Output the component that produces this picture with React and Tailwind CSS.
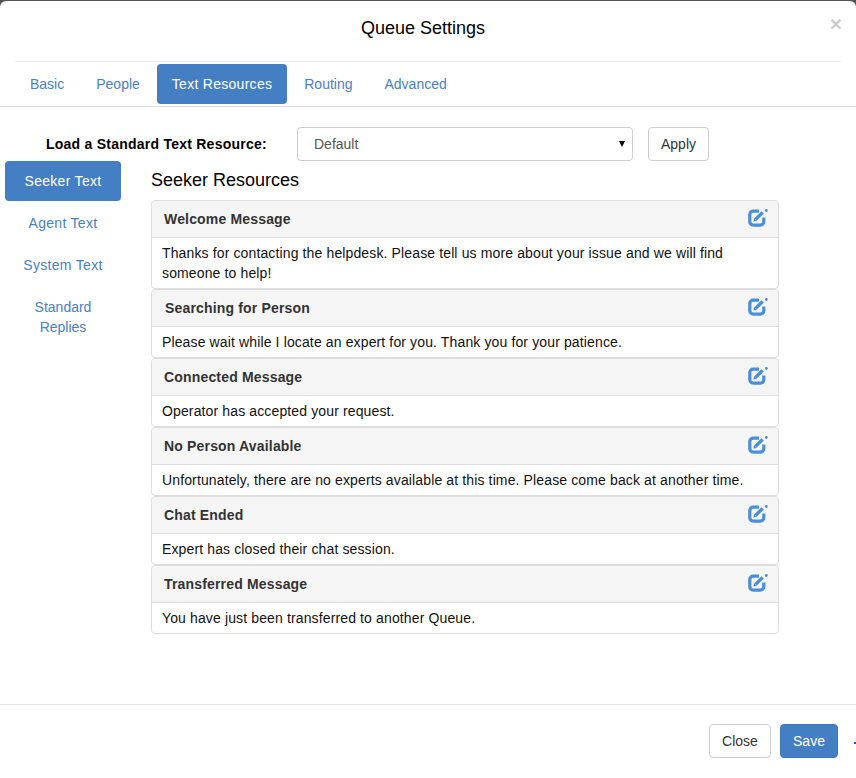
import { useState } from "react"

const tabs = ["Basic", "People", "Text Resources", "Routing", "Advanced"]

const resources = [
  { title: "Welcome Message", body: "Thanks for contacting the helpdesk. Please tell us more about your issue and we will find someone to help!" },
  { title: "Searching for Person", body: "Please wait while I locate an expert for you. Thank you for your patience.", nudge: true },
  { title: "Connected Message", body: "Operator has accepted your request." },
  { title: "No Person Available", body: "Unfortunately, there are no experts available at this time. Please come back at another time." },
  { title: "Chat Ended", body: "Expert has closed their chat session." },
  { title: "Transferred Message", body: "You have just been transferred to another Queue." },
]

function EditIcon() {
  return (
    <svg className="-mt-[2px]" width="20" height="18" viewBox="0 0 20 18" fill="none" stroke="#4a8fd6" strokeWidth="3.2" strokeLinejoin="round">
      <path d="M11 2.2H5.2A3.4 3.4 0 0 0 1.8 5.6V12.8A3.4 3.4 0 0 0 5.2 16.2h7.2a3.4 3.4 0 0 0 3.4-3.4V8.6" />
      <path d="M7.6 10.4 14.6 3.4" strokeWidth="3.4" />
      <path d="M5.4 12.6l.7-3.6 2.9 2.9z" fill="#4a8fd6" stroke="none" />
      <circle cx="18.3" cy="1.5" r="1.4" fill="#4a8fd6" stroke="none" />
    </svg>
  )
}

function ResourcePanel({ title, body, nudge }) {
  return (
    <div className="border border-[#ddd] rounded bg-white">
      <div className={"flex justify-between items-center h-[37px] pr-[10px] bg-[#f5f5f5] border-b border-[#ddd] rounded-t " + (nudge ? "pl-[13px]" : "pl-3")}>
        <span className="font-bold tracking-[0.17px] text-[#333]">{title}</span>
        <EditIcon />
      </div>
      <div className="px-[10px] py-[5px] leading-5 tracking-[0.13px] text-[#111]">{body}</div>
    </div>
  )
}

export default function App() {
  const [tab] = useState("Text Resources")

  return (
    <div className="h-[778px] bg-[#555] font-['Liberation_Sans',Arial,sans-serif] text-sm overflow-hidden">
      <div className="relative h-[777px] mt-px bg-white rounded-t-md flex flex-col">
        {/* Header */}
        <div className="mx-[15px] h-[61px] border-b border-[#eee] flex items-center justify-center pr-[10px] shrink-0">
          <h4 className="text-lg leading-none text-black -mt-[6px]">Queue Settings</h4>
        </div>
        <button className="absolute top-[13px] right-[14px] text-[21px] leading-5 font-bold text-[#ccc]">×</button>

        {/* Tabs */}
        <div className="h-[45px] border-b border-[#ddd] pl-[15px] pt-[2px] flex gap-[2px] shrink-0">
          {tabs.map((t) => (
            <a key={t} className={"h-10 px-[15px] flex items-center rounded " + (t === tab ? "bg-[#447fc3] text-white tracking-[0.28px]" : "text-[#4a80c4]")}>
              {t}
            </a>
          ))}
        </div>

        {/* Standard resource row */}
        <div className="flex items-center h-[34px] mt-5 shrink-0">
          <label className="w-[267px] pl-[46px] font-bold tracking-[0.24px] text-black whitespace-nowrap">Load a Standard Text Resource:</label>
          <div className="ml-[30px] w-[336px] h-[34px] border border-[#ccc] rounded flex items-center justify-between pl-4 pr-[7px] text-[#555]">
            <span>Default</span>
            <span className="w-0 h-0 border-x-[3.5px] border-x-transparent border-t-[6px] border-t-black"></span>
          </div>
          <button className="ml-[15px] w-[61px] h-[34px] border border-[#ccc] rounded text-[#333]">Apply</button>
        </div>

        {/* Main */}
        <div className="flex flex-1 min-h-0">
          <div className="w-[116px] ml-[5px] flex flex-col gap-[2px] shrink-0">
            <a className="h-10 flex items-center justify-center rounded bg-[#447fc3] text-white tracking-[0.3px]">Seeker Text</a>
            <a className="h-10 flex items-center justify-center text-[#4a80c4] tracking-[0.3px]">Agent Text</a>
            <a className="h-10 flex items-center justify-center text-[#4a80c4] tracking-[0.3px]">System Text</a>
            <a className="h-[60px] flex items-center justify-center text-center leading-5 px-4 text-[#4a80c4]">Standard Replies</a>
          </div>
          <div className="w-[628px] ml-[30px]">
            <h4 className="text-lg leading-5 h-[39px] pt-[9px] text-black">Seeker Resources</h4>
            {resources.map((r) => (
              <ResourcePanel key={r.title} title={r.title} body={r.body} nudge={r.nudge} />
            ))}
          </div>
        </div>

        {/* Footer */}
        <div className="h-[74px] border-t border-[#e5e5e5] flex justify-end items-start gap-[9px] pt-[19px] pr-[18px] shrink-0">
          <button className="w-[62px] h-[34px] border border-[#ccc] rounded text-[#333]">Close</button>
          <button className="w-[58px] h-[34px] rounded bg-[#447fc3] border border-[#3f78b8] text-white">Save</button>
        </div>
        <span className="absolute right-0 top-[741px] w-[2px] h-[2px] bg-[#2a4fd0]"></span>
      </div>
    </div>
  )
}
